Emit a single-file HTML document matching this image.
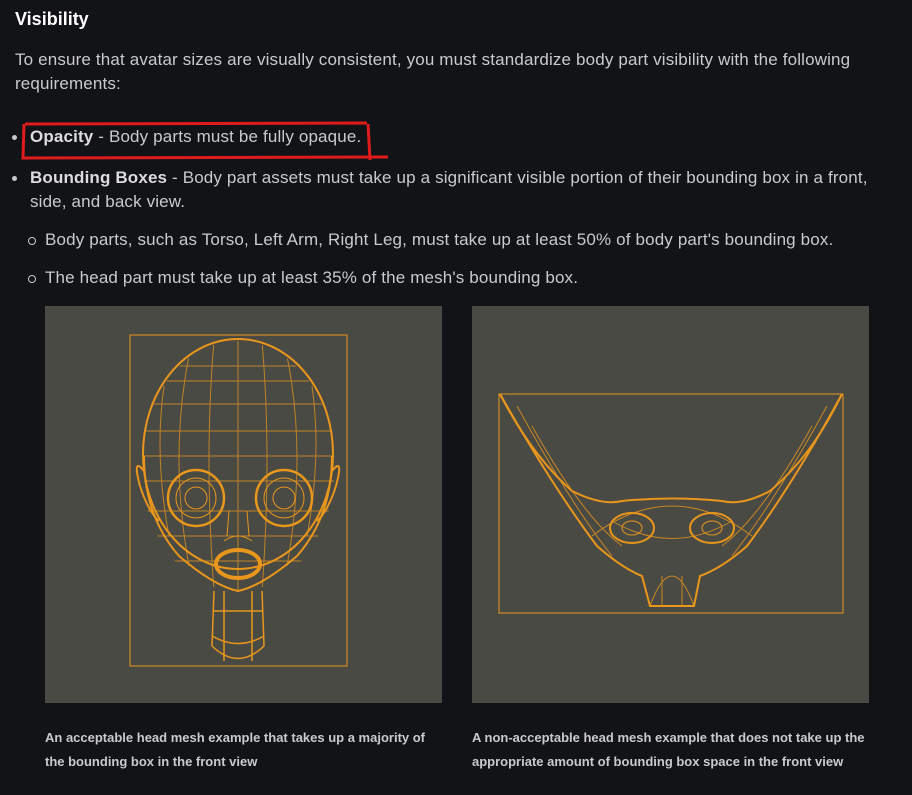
<!DOCTYPE html>
<html><head><meta charset="utf-8"><style>
body{margin:0;width:912px;height:795px;background:#121317;font-family:"Liberation Sans",sans-serif;color:#c9cacc;position:relative;overflow:hidden}
.t{position:absolute;white-space:nowrap;font-size:17px;letter-spacing:0.15px}
b{color:#dcdcdc}
.dot{position:absolute;width:5px;height:5px;border-radius:50%;background:#c9cacc}
.ring{position:absolute;width:6px;height:6px;border-radius:50%;border:1.3px solid #c9cacc}
.panel{position:absolute;top:306px;width:397px;height:397px;background:#4a4a44}
.cap{position:absolute;font-size:13px;font-weight:bold;color:#c9cacc;line-height:24px;white-space:nowrap}
</style></head><body>
<div class="t" style="left:15px;top:9px;font-size:18px;font-weight:bold;color:#fff;letter-spacing:0">Visibility</div>
<div class="t" style="left:15px;top:48px;line-height:24px">To ensure that avatar sizes are visually consistent, you must standardize body part visibility with the following<br>requirements:</div>
<div class="dot" style="left:12px;top:135px"></div>
<div class="t" style="left:30px;top:127px"><b>Opacity</b> - Body parts must be fully opaque.</div>
<svg style="position:absolute;left:0;top:0" width="912" height="200"><path d="M25 124 L367 123 M368 124 L370 160 M24 124 L23 158 L388 157" fill="none" stroke="#e01b1b" stroke-width="3"/></svg>
<div class="dot" style="left:12px;top:176px"></div>
<div class="t" style="left:30px;top:166px;line-height:24px"><b>Bounding Boxes</b> - Body part assets must take up a significant visible portion of their bounding box in a front,<br>side, and back view.</div>
<div class="ring" style="left:28px;top:237px"></div>
<div class="t" style="left:45px;top:230px">Body parts, such as Torso, Left Arm, Right Leg, must take up at least 50% of body part's bounding box.</div>
<div class="ring" style="left:28px;top:275px"></div>
<div class="t" style="left:45px;top:268px">The head part must take up at least 35% of the mesh's bounding box.</div>
<div class="panel" style="left:45px"><svg width="397" height="397" fill="none" stroke="#e8961c" stroke-width="1">
<defs><clipPath id="h"><ellipse cx="154" cy="160" rx="97" ry="125"/></clipPath></defs>
<rect x="85" y="29" width="217" height="331"/>
<g transform="translate(39,0)">
<ellipse cx="154" cy="148" rx="95" ry="115" stroke-width="2"/>
<path d="M60 150 Q60 210 95 250 Q130 280 154 285 Q178 280 213 250 Q248 210 248 150" stroke-width="2"/>
<g clip-path="url(#h)" opacity=".75">
<path d="M154 35 V290 M130 35 Q120 150 130 285 M178 35 Q188 150 178 285 M105 50 Q85 150 105 260 M203 50 Q223 150 203 260 M80 80 Q70 150 85 230 M228 80 Q238 150 223 230"/>
<path d="M60 60 H250 M60 75 H250 M60 98 H250 M60 125 H250 M60 150 H250 M60 175 H250 M60 205 H250 M60 230 H250 M60 255 H250"/>
</g>
<circle cx="112" cy="192" r="28" stroke-width="2.5"/><circle cx="112" cy="192" r="20"/><circle cx="112" cy="192" r="11"/>
<circle cx="200" cy="192" r="28" stroke-width="2.5"/><circle cx="200" cy="192" r="20"/><circle cx="200" cy="192" r="11"/>
<path d="M143 230 L145 205 M165 230 L163 205 M140 235 Q154 225 168 235"/>
<ellipse cx="154" cy="258" rx="22" ry="14" stroke-width="4"/>
<path d="M130 285 L128 340 Q154 365 180 340 L178 285 M128 330 Q154 345 180 330 M140 285 V355 M168 285 V355 M129 305 H179" stroke-width="1.5"/>
<path d="M60 165 Q48 150 56 180 Q64 205 75 215 M248 165 Q260 150 252 180 Q244 205 233 215" stroke-width="2"/>
</g>
</svg></div>
<div class="panel" style="left:472px"><svg width="397" height="397" fill="none" stroke="#e8961c" stroke-width="1">
<rect x="27" y="88" width="344" height="219"/>
<path d="M28 88 Q60 150 100 185 Q130 200 150 195 Q200 190 250 195 Q270 200 298 185 Q340 150 370 88" stroke-width="2"/>
<path d="M28 88 Q80 180 125 240 Q150 262 170 270 L178 300 H222 L228 270 Q250 262 275 240 Q320 180 370 88" stroke-width="2"/>
<path d="M120 230 Q200 170 280 230 M140 215 Q200 250 260 215 M178 300 Q200 240 222 300 M60 120 Q110 210 150 240 M340 120 Q290 210 250 240 M45 100 Q100 200 140 250 M355 100 Q300 200 260 250 M190 270 V300 M210 270 V300" opacity=".8"/>
<ellipse cx="160" cy="222" rx="22" ry="15" stroke-width="2"/><ellipse cx="240" cy="222" rx="22" ry="15" stroke-width="2"/>
<ellipse cx="160" cy="222" rx="10" ry="7"/><ellipse cx="240" cy="222" rx="10" ry="7"/>
</svg></div>
<div class="cap" style="left:45px;top:726px">An acceptable head mesh example that takes up a majority of<br>the bounding box in the front view</div>
<div class="cap" style="left:472px;top:726px">A non-acceptable head mesh example that does not take up the<br>appropriate amount of bounding box space in the front view</div>
</body></html>
